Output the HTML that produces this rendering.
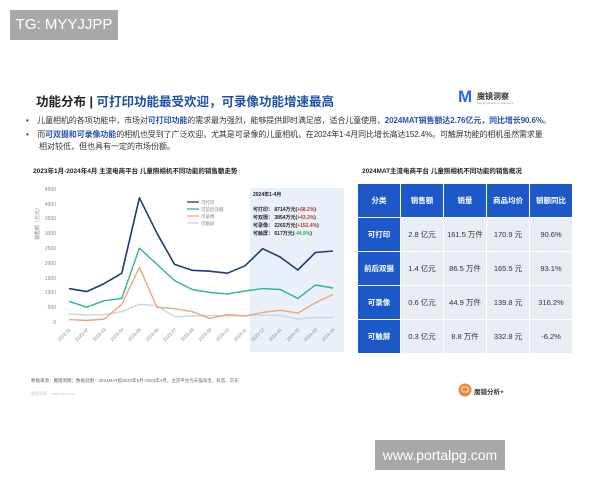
<!DOCTYPE html>
<html><head><meta charset="utf-8"><style>
body{margin:0;width:600px;height:480px;background:#fff;position:relative;overflow:hidden;font-family:"Liberation Sans","Noto Sans CJK SC",sans-serif;}
.a{position:absolute;white-space:nowrap}
table{position:absolute;left:357px;top:183px;border-collapse:collapse;font-size:7.5px;}
td{width:42px;text-align:center;border:1.5px solid #fff;background:#e9ecf3;color:#333;padding:0;height:33px}
tr:first-child td,td:first-child{background:#1d58c9;color:#fff;font-weight:bold}
</style></head><body>
<div class="a" style="left:10px;top:10px;width:108px;height:30px;background:#a8a8a8;color:#fff;font-size:15px;line-height:30px;text-align:center">TG: MYYJJPP</div>
<div class="a" style="left:36px;top:91px;font-size:12.5px;font-weight:bold;color:#222">功能分布 | <span style="color:#1d4fa6">可打印功能最受欢迎，可录像功能增速最高</span></div>
<div class="a" style="left:458px;top:89px;width:16px;height:16px;color:#2d6ad6;font-weight:bold;font-size:17px;line-height:16px">M</div>
<div class="a" style="left:477px;top:91px;font-size:8px;font-weight:bold;color:#333">魔镜洞察</div>
<div class="a" style="left:477px;top:101px;font-size:3px;color:#999">Moojing Market Intelligence</div>
<div class="a" style="left:26px;top:115px;font-size:8px;color:#333;letter-spacing:-0.1px">•&nbsp;&nbsp;&nbsp;&nbsp;儿童相机的各项功能中，市场对<b style="color:#2455b0">可打印功能</b>的需求最为强烈，能够提供即时满足感，适合儿童使用，<b style="color:#2455b0">2024MAT销售额达2.76亿元，同比增长90.6%</b>。</div>
<div class="a" style="left:26px;top:129px;font-size:8px;color:#333;letter-spacing:-0.1px">•&nbsp;&nbsp;&nbsp;&nbsp;而<b style="color:#2455b0">可双摄和可录像功能</b>的相机也受到了广泛欢迎，尤其是可录像的儿童相机，在2024年1-4月同比增长高达152.4%。可触屏功能的相机虽然需求量</div>
<div class="a" style="left:39px;top:141px;font-size:8px;color:#333">相对较低，但也具有一定的市场份额。</div>
<div class="a" style="left:33px;top:165px;font-size:6.5px;font-weight:bold;color:#222">2023年1月-2024年4月 主流电商平台 儿童照相机不同功能的销售额走势</div>
<div class="a" style="left:362px;top:165px;font-size:6.5px;font-weight:bold;color:#222">2024MAT主流电商平台 儿童照相机不同功能的销售概况</div>
<svg class="a" style="left:0;top:0" width="600" height="480">
<rect x="250" y="188" width="94" height="164" fill="#eaf0fa"/>
<g font-size="5" fill="#888" text-anchor="end">
<text x="56" y="191">4500</text><text x="56" y="206">4000</text><text x="56" y="220">3500</text><text x="56" y="235">3000</text><text x="56" y="250">2500</text><text x="56" y="265">2000</text><text x="56" y="280">1500</text><text x="56" y="294">1000</text><text x="56" y="309">500</text><text x="56" y="324">0</text>
</g>
<text x="39" y="240" font-size="5" fill="#888" transform="rotate(-90 39 240)">销售额（万元）</text>
<g font-size="4.5" fill="#888" text-anchor="end">
<text transform="translate(71,330) rotate(-45)">2023-01</text><text transform="translate(88.6,330) rotate(-45)">2023-02</text><text transform="translate(106.2,330) rotate(-45)">2023-03</text><text transform="translate(123.8,330) rotate(-45)">2023-04</text><text transform="translate(141.4,330) rotate(-45)">2023-05</text><text transform="translate(159,330) rotate(-45)">2023-06</text><text transform="translate(176.6,330) rotate(-45)">2023-07</text><text transform="translate(194.2,330) rotate(-45)">2023-08</text><text transform="translate(211.8,330) rotate(-45)">2023-09</text><text transform="translate(229.4,330) rotate(-45)">2023-10</text><text transform="translate(247,330) rotate(-45)">2023-11</text><text transform="translate(264.6,330) rotate(-45)">2023-12</text><text transform="translate(282.2,330) rotate(-45)">2024-01</text><text transform="translate(299.8,330) rotate(-45)">2024-02</text><text transform="translate(317.4,330) rotate(-45)">2024-03</text><text transform="translate(335,330) rotate(-45)">2024-04</text>
</g>
<g fill="none" stroke-width="1.4" stroke-linejoin="round">
<polyline stroke="#ccd3e6" points="69,314 86.6,314.9 104.2,314.6 121.8,311.7 139.4,304.3 157,305.7 174.6,316.7 192.2,316.1 209.8,315.5 227.4,316.1 245,315.5 262.6,315.2 280.2,315.5 297.8,319 315.4,317.6 333,317.6"/>
<polyline stroke="#eea67a" points="69,319.6 86.6,320.5 104.2,319 121.8,304.3 139.4,267.3 157,307.2 174.6,308.7 192.2,311.7 209.8,318.5 227.4,314.6 245,316.1 262.6,312.5 280.2,310.2 297.8,313.1 315.4,302.8 333,294.5"/>
<polyline stroke="#2fb58a" points="69,301.3 86.6,307.2 104.2,300.7 121.8,298.4 139.4,248.1 157,264.4 174.6,280.6 192.2,289.5 209.8,292.4 227.4,293.9 245,291 262.6,288.6 280.2,289.5 297.8,298.4 315.4,285 333,288"/>
<polyline stroke="#1e3a7a" stroke-width="1.6" points="69,288.6 86.6,291.6 104.2,283.6 121.8,273.2 139.4,197.8 157,233.3 174.6,264.4 192.2,270.3 209.8,271.2 227.4,273.2 245,265.8 262.6,248.7 280.2,257 297.8,270 315.4,252.5 333,251"/>
</g>
<g font-size="4.5" fill="#888">
<line x1="187" y1="202" x2="199" y2="202" stroke="#1e3a7a" stroke-width="1.3"/><text x="201" y="204">可打印</text>
<line x1="187" y1="209" x2="199" y2="209" stroke="#2fb58a" stroke-width="1.3"/><text x="201" y="211">可前后双摄</text>
<line x1="187" y1="216" x2="199" y2="216" stroke="#eea67a" stroke-width="1.3"/><text x="201" y="218">可录像</text>
<line x1="187" y1="223" x2="199" y2="223" stroke="#ccd3e6" stroke-width="1.3"/><text x="201" y="225">可触屏</text>
</g>
<g font-size="5" font-weight="bold" fill="#222">
<text x="253" y="196">2024年1-4月</text>
<text x="253" y="211">可打印： 8714万元(<tspan fill="#c0392b">+68.2%</tspan>)</text>
<text x="253" y="219">可双摄： 3854万元(<tspan fill="#c0392b">+43.3%</tspan>)</text>
<text x="253" y="227">可录像： 2265万元(<tspan fill="#c0392b">+152.4%</tspan>)</text>
<text x="253" y="235">可触屏： 617万元(<tspan fill="#27ae60">-44.9%</tspan>)</text>
</g>
<circle cx="465" cy="390" r="6.5" fill="#e88a3a"/><rect x="462" y="387" width="6" height="5" rx="1" fill="none" stroke="#fff" stroke-width="0.8"/>
</svg>
<table>
<tr><td>分类</td><td>销售额</td><td>销量</td><td>商品均价</td><td>销额同比</td></tr>
<tr><td>可打印</td><td>2.8 亿元</td><td>161.5 万件</td><td>170.9 元</td><td>90.6%</td></tr>
<tr><td>前后双摄</td><td>1.4 亿元</td><td>86.5 万件</td><td>165.5 元</td><td>93.1%</td></tr>
<tr><td>可录像</td><td>0.6 亿元</td><td>44.9 万件</td><td>139.8 元</td><td>316.2%</td></tr>
<tr><td>可触屏</td><td>0.3 亿元</td><td>8.8 万件</td><td>332.8 元</td><td>-6.2%</td></tr>
</table>
<div class="a" style="left:31px;top:378px;font-size:4.5px;color:#666">数据来源：魔镜洞察；数据说明：2024MAT指2023年5月-2024年4月，主流平台为天猫淘宝、抖音、京东</div>
<div class="a" style="left:31px;top:391px;font-size:4px;color:#ccc">魔镜洞察　mktindex.com</div>
<div class="a" style="left:474px;top:386px;font-size:6.5px;font-weight:bold;color:#333">魔镜分析+</div>
<div class="a" style="left:375px;top:440px;width:130px;height:30px;background:#a8a8a8;color:#fff;font-size:14px;line-height:30px;text-align:center">www.portalpg.com</div>
</body></html>
